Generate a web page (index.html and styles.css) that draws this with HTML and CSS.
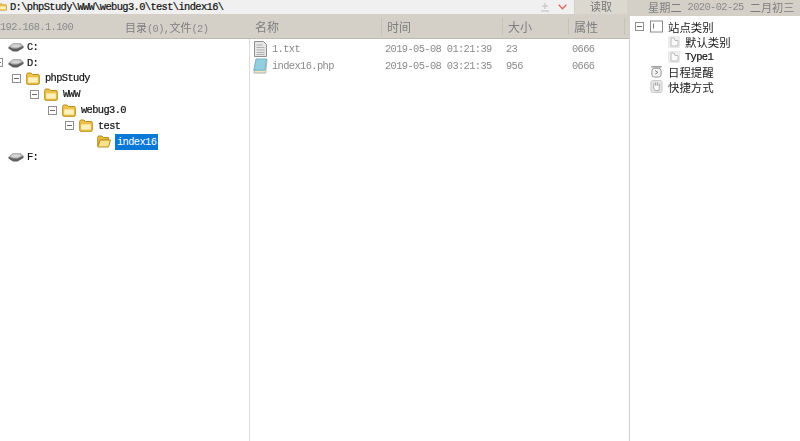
FILE: index.html
```html
<!DOCTYPE html>
<html>
<head>
    <title>File Manager</title>
    <link rel="stylesheet" href="styles.css">
</head>

<body>
    <svg class="defs" width="0" height="0">
        <symbol id="drive" viewBox="0 0 16 10">
            <path d="M0.5 5 L5.5 1 H12 L15.5 4 V6 L9.5 9.5 H5 L0.5 6.5 Z" fill="#5f5f5f"/>
            <path d="M0.5 4.6 L5.5 1 H12 L15.5 3.8 L9.5 6.4 H5 Z" fill="#b4b4b4"/>
            <path d="M5 2.4 H11 L13 3.8 L9 5.2 H5.5 L3 4 Z" fill="#d6d6d6"/>
        </symbol>
        <symbol id="folder" viewBox="0 0 14 13">
            <path d="M0.7 11 V2.5 Q0.7 1 2 1 H5 L6.5 2.5 H12 Q13.3 2.5 13.3 4 V11 Q13.3 12.3 12 12.3 H2 Q0.7 12.3 0.7 11 Z" fill="#eec24a" stroke="#b98f1c"/>
            <path d="M2.2 5.4 H11.8 V10.6 H2.2 Z" fill="#fdf1bd"/>
        </symbol>
        <symbol id="folder-open" viewBox="0 0 14 13">
            <path d="M0.7 11 V2.5 Q0.7 1 2 1 H5 L6.5 2.5 H11.5 V5 H3.5 Z" fill="#e8bb40" stroke="#b98f1c"/>
            <path d="M3.2 5 H13.5 L11.5 12 H0.8 Z" fill="#f9e08c" stroke="#b98f1c"/>
        </symbol>
        <symbol id="txt" viewBox="0 0 14 16">
            <path d="M1 0.5 H10 L13 3.5 V15.5 H1 Z" fill="#e6e6e6" stroke="#8e8e8e"/>
            <path d="M3 4 H9 M3 6.5 H11 M3 9 H11 M3 11.5 H11 M3 13.5 H11" stroke="#b0b0b0"/>
        </symbol>
        <symbol id="php" viewBox="0 0 16 16">
            <path d="M3 1 H15 L13.5 15.5 H1 Z" fill="#efe4bf" stroke="#a9b2b0"/>
            <path d="M3.5 0.5 H14.5 L12.5 12.5 H0.8 Z" fill="#93cde0" stroke="#73b0c8"/>
        </symbol>
        <symbol id="page" viewBox="0 0 12 12">
            <rect x="0.5" y="0.5" width="11" height="11" fill="#eeeeee" stroke="#dddddd" stroke-dasharray="1 1"/>
            <path d="M3 2 H6 L7 4.5 H10 V10 H3 Z" fill="#fafafa" stroke="#bcbcbc"/>
        </symbol>
        <symbol id="site" viewBox="0 0 13 12">
            <rect x="0.5" y="0.5" width="12" height="11" fill="#fff" stroke="#8a8a8a"/>
            <path d="M3.5 3 V8" stroke="#777"/>
        </symbol>
        <symbol id="clock" viewBox="0 0 13 14">
            <path d="M1 2 H12" stroke="#8a8a8a" stroke-width="1.4"/>
            <rect x="1.5" y="3.5" width="10" height="9.5" rx="3" fill="#f4f4f4" stroke="#8a8a8a"/>
            <path d="M5 6 L8 8 L5 10" fill="none" stroke="#777"/>
        </symbol>
        <symbol id="hand" viewBox="0 0 13 14">
            <rect x="0.5" y="0.5" width="12" height="13" rx="2" fill="#e6e6e6" stroke="#c8c8c8"/>
            <path d="M3.5 6 V3.5 M5.5 6 V2.5 M7.5 6 V2.5 M9.5 6.5 V4 M3.5 6 V9 L5 11.5 H9 L9.5 9 V6" fill="#fafafa" stroke="#a4a4a4"/>
        </symbol>
    </svg>

    <div class="app">
        <div class="main">
            <div class="pathbar">
                <div class="path">
                    <svg class="path-icon"><use href="#folder"/></svg>
                    <span>D:\phpStudy\WWW\webug3.0\test\index16\</span>
                    <span class="path-actions">
                        <svg class="plus" viewBox="0 0 8 9"><path d="M4 0 V6 M1 3 H7 M0 8 H8" stroke="#bdbdbd" fill="none"/></svg>
                        <svg class="chevron" viewBox="0 0 9 6"><path d="M0.7 0.7 L4.5 4.7 L8.3 0.7" stroke="#e2645c" stroke-width="1.3" fill="none"/></svg>
                    </span>
                </div>
                <div class="read-btn">读取</div>
            </div>

            <div class="headers">
                <div class="head-left">
                    <span class="mono ip">192.168.1.100</span>
                    <span class="counts">目录<span class="mono">(0),</span>文件<span class="mono">(2)</span></span>
                </div>
                <div class="col col-name">名称</div>
                <div class="col col-time">时间</div>
                <div class="col col-size">大小</div>
                <div class="col col-attr">属性</div>
            </div>

            <div class="panes">
                <div class="tree">
                    <div class="node level0"><i class="toggle none"></i><svg class="drive"><use href="#drive"/></svg><span class="mono dark">C:</span></div>
                    <div class="node level0"><i class="toggle"></i><svg class="drive"><use href="#drive"/></svg><span class="mono dark">D:</span></div>
                    <div class="node level1"><i class="toggle"></i><svg class="ficon"><use href="#folder"/></svg><span class="mono dark">phpStudy</span></div>
                    <div class="node level2"><i class="toggle"></i><svg class="ficon"><use href="#folder"/></svg><span class="mono dark">WWW</span></div>
                    <div class="node level3"><i class="toggle"></i><svg class="ficon"><use href="#folder"/></svg><span class="mono dark">webug3.0</span></div>
                    <div class="node level4"><i class="toggle"></i><svg class="ficon"><use href="#folder"/></svg><span class="mono dark">test</span></div>
                    <div class="node level5"><i class="toggle none"></i><svg class="ficon"><use href="#folder-open"/></svg><span class="mono selected">index16</span></div>
                    <div class="node level0"><i class="toggle none"></i><svg class="drive"><use href="#drive"/></svg><span class="mono dark">F:</span></div>
                </div>

                <div class="files">
                    <div class="file">
                        <div class="col-name"><svg class="file-icon"><use href="#txt"/></svg><span class="mono">1.txt</span></div>
                        <div class="col-time">2019-05-08 01:21:39</div>
                        <div class="col-size">23</div>
                        <div class="col-attr">0666</div>
                    </div>
                    <div class="file">
                        <div class="col-name"><svg class="file-icon"><use href="#php"/></svg><span class="mono">index16.php</span></div>
                        <div class="col-time">2019-05-08 03:21:35</div>
                        <div class="col-size">956</div>
                        <div class="col-attr">0666</div>
                    </div>
                </div>
            </div>
        </div>

        <div class="side">
            <div class="datebar"><span>星期二</span><span class="mono">2020-02-25</span><span>二月初三</span></div>
            <div class="side-tree">
                <div class="side-row"><i class="toggle"></i><svg class="side-icon"><use href="#site"/></svg><span>站点类别</span></div>
                <div class="side-row sub"><svg class="page-icon"><use href="#page"/></svg><span>默认类别</span></div>
                <div class="side-row sub"><svg class="page-icon"><use href="#page"/></svg><span class="mono dark">Type1</span></div>
                <div class="side-row top"><svg class="side-icon"><use href="#clock"/></svg><span>日程提醒</span></div>
                <div class="side-row top"><svg class="side-icon"><use href="#hand"/></svg><span>快捷方式</span></div>
            </div>
        </div>
    </div>
</body>
</html>
```

FILE: styles.css
```css
html, body {
    margin: 0;
    height: 100%;
    overflow: hidden;
}

body {
    background: #fff;
    font-family: "Noto Sans CJK SC", sans-serif;
    font-size: 12px;
    color: #222;
}

.defs {
    display: block;
    height: 0;
}

.app {
    display: flex;
    height: 441px;
    filter: blur(0.45px);
}

.main {
    width: 630px;
    display: flex;
    flex-direction: column;
    border-right: 1px solid #cfcfcf;
    box-sizing: border-box;
}

.mono {
    font-family: "Liberation Mono", monospace;
    font-size: 10.4px;
    letter-spacing: -0.62px;
    color: #8a8a8a;
}

.dark {
    color: #111;
    -webkit-text-stroke: 0.2px #111;
}

/* top path row */
.pathbar {
    display: flex;
    height: 14px;
    background: #d4d0c8;
}

.path {
    width: 574px;
    display: flex;
    align-items: center;
    background: #f0f0f0;
    font-family: "Liberation Mono", monospace;
    font-size: 10.4px;
    letter-spacing: -0.62px;
    color: #111;
    -webkit-text-stroke: 0.2px #111;
    overflow: hidden;
}

.path-icon {
    width: 8px;
    height: 12px;
    margin-right: 3px;
    margin-left: -1px;
}

.path-actions {
    margin-left: auto;
    display: flex;
    align-items: center;
    gap: 9px;
    padding-right: 7px;
}

.plus {
    width: 8px;
    height: 9px;
}

.chevron {
    width: 9px;
    height: 6px;
}

.read-btn {
    width: 52px;
    margin-left: 1px;
    text-align: center;
    font-size: 11px;
    line-height: 13px;
    color: #777;
    background: #dbd8d0;
}

/* column headers */
.headers {
    display: flex;
    align-items: center;
    height: 24px;
    background: #d4d0c8;
    color: #7f7f7f;
}

.head-left {
    width: 250px;
    display: flex;
    align-items: center;
    font-size: 11px;
    padding-top: 2px;
    box-sizing: border-box;
}

.ip {
    width: 125px;
}

.col {
    box-sizing: border-box;
    padding-left: 5px;
    border-right: 1px solid #c6c2ba;
    line-height: 17px;
}

.col-name {
    width: 132px;
    display: flex;
    align-items: center;
}

.col-time {
    width: 121px;
}

.col-size {
    width: 66px;
}

.col-attr {
    width: 56px;
}

/* folder tree */
.panes {
    flex: 1;
    display: flex;
    border-top: 1px solid #bdb9b0;
    min-height: 0;
}

.tree {
    width: 250px;
    box-sizing: border-box;
    border-right: 1px solid #dcdcdc;
    overflow: hidden;
}

.node {
    height: 15.8px;
    display: flex;
    align-items: center;
}

.level0 { margin-left: -6px; }
.level1 { margin-left: 12px; }
.level2 { margin-left: 30px; }
.level3 { margin-left: 48px; }
.level4 { margin-left: 65px; }
.level5 { margin-left: 83px; }

.toggle {
    width: 7px;
    height: 7px;
    flex: none;
    margin-right: 5px;
    border: 1px solid #8f8f8f;
    background: linear-gradient(#6a6a6a, #6a6a6a) center / 5px 1px no-repeat;
}

.toggle.none {
    visibility: hidden;
}

.drive {
    width: 16px;
    height: 10px;
    margin-right: 3px;
}

.ficon {
    width: 14px;
    height: 13px;
    margin-right: 5px;
}

.selected {
    background: #0a78d7;
    color: #fff;
    padding: 2px;
    margin-left: -1px;
    line-height: 12px;
}

/* file list */
.files {
    flex: 1;
    padding-top: 1px;
    color: #8a8a8a;
    font-family: "Liberation Mono", monospace;
    font-size: 10.4px;
    letter-spacing: -0.62px;
}

.file {
    display: flex;
    align-items: center;
    height: 17px;
}

.file .col-name {
    padding-left: 3px;
    box-sizing: border-box;
    width: 135px;
}

.file .col-time {
    width: 121px;
    white-space: nowrap;
}

.file .col-size {
    width: 66px;
}

.file-icon {
    width: 15px;
    height: 16px;
    margin-right: 4px;
}

/* right side panel */
.side {
    flex: 1;
    display: flex;
    flex-direction: column;
}

.datebar {
    height: 16px;
    display: flex;
    align-items: center;
    gap: 6px;
    margin-left: -1px;
    padding-left: 19px;
    padding-bottom: 2px;
    box-sizing: border-box;
    background: #d4d0c8;
    color: #7f7f7f;
    font-size: 11.2px;
    white-space: nowrap;
}

.side-tree {
    padding: 3px 0 0 5px;
}

.side-row {
    display: flex;
    align-items: center;
    height: 15px;
    font-size: 11.4px;
    color: #222;
}

.side-row .toggle {
    margin-right: 6px;
}

.side-icon {
    width: 13px;
    height: 13px;
    margin-right: 5px;
    flex: none;
}

.side-row.sub {
    padding-left: 33px;
}

.side-row.top {
    padding-left: 15px;
}

.page-icon {
    width: 12px;
    height: 12px;
    margin-right: 5px;
}
```
